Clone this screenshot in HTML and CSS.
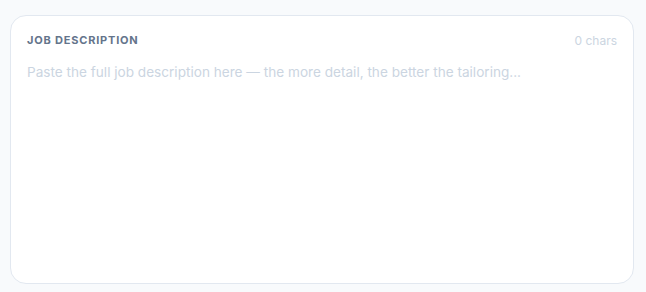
FILE: index.html
```html
<!DOCTYPE html>
<html lang="en">
<head>
  <meta charset="UTF-8" />
  <meta name="viewport" content="width=device-width, initial-scale=1.0" />
  <title>Job description</title>
  <link rel="stylesheet" href="styles.css">
</head>
<body>
  <div class="page">
    <div class="card">
      <div class="card-head">
        <label class="card-title" for="jd">Job Description</label>
        <span class="char-count">0 chars</span>
      </div>
      <textarea id="jd" class="jd-input" placeholder="Paste the full job description here — the more detail, the better the tailoring..."></textarea>
    </div>
  </div>
</body>
</html>
```

FILE: styles.css
```css
* {
  margin: 0;
  padding: 0;
  box-sizing: border-box;
}
body, html {
  width: 100%;
  height: 100%;
  background-color: #f8fafc;
  font-family: Inter, "Liberation Sans", sans-serif;
}
.page {
  height: 100%;
  padding: 15px 12px 8px 10px;
  display: flex;
}
.card {
  flex: 1;
  display: flex;
  flex-direction: column;
  background: #fff;
  border: 1px solid #e2e8f0;
  border-radius: 16px;
  padding: 16px 16px 16px 16px;
}
.card-head {
  display: flex;
  justify-content: space-between;
  align-items: center;
  height: 16px;
}
.card-title {
  font-size: 11px;
  font-weight: 700;
  letter-spacing: 0.8px;
  text-transform: uppercase;
  color: #64748b;
}
.char-count {
  font-size: 12px;
  color: #cbd5e1;
}
.jd-input {
  flex: 1;
  margin-top: 14px;
  border: none;
  outline: none;
  resize: none;
  font-family: inherit;
  font-size: 13.6px;
  line-height: 20px;
  color: #334155;
  background: transparent;
}
.jd-input::placeholder {
  color: #cbd5e1;
}
```
